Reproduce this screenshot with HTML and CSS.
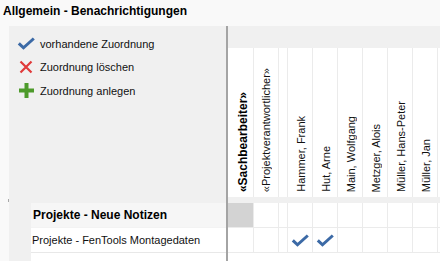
FILE: index.html
```html
<!DOCTYPE html>
<html lang="de">
<head>
<meta charset="utf-8">
<title>Allgemein - Benachrichtigungen</title>
<link rel="stylesheet" href="styles.css">
</head>
<body>
<div class="title">Allgemein - Benachrichtigungen</div>
<div class="main">
  <div class="gutter"><span class="grip"></span></div>
  <div class="left">
    <div class="legend">
      <div class="item">
        <span class="ico"><svg width="18" height="13" viewBox="0 0 18 13"><path d="M1.8 6.3 L6.5 10.8 L16.8 1.5" fill="none" stroke="#3c6aa6" stroke-width="3"/></svg></span>
        <span>vorhandene Zuordnung</span>
      </div>
      <div class="item">
        <span class="ico"><svg width="14" height="14" viewBox="0 0 14 14"><path d="M1.5 1.5 L12.5 12.5 M12.5 1.5 L1.5 12.5" fill="none" stroke="#e03a3a" stroke-width="2.2"/></svg></span>
        <span>Zuordnung löschen</span>
      </div>
      <div class="item">
        <span class="ico"><svg width="15" height="15" viewBox="0 0 15 15"><path d="M5.5 0 H9.5 V5.5 H15 V9.5 H9.5 V15 H5.5 V9.5 H0 V5.5 H5.5 Z" fill="#4d9a2b"/></svg></span>
        <span>Zuordnung anlegen</span>
      </div>
    </div>
    <div class="rows">
      <div class="lrow group">Projekte - Neue Notizen</div>
      <div class="lrow">Projekte - FenTools Montagedaten</div>
    </div>
  </div>
  <div class="divider"></div>
  <div class="right">
    <div class="topband"></div>
    <div class="grid">
      <div class="h sach"><span>«Sachbearbeiter»</span></div>
      <div class="h proj"><span>«Projektverantwortlicher»</span></div>
      <div class="h gap"></div>
      <div class="h"><span>Hammer, Frank</span></div>
      <div class="h"><span>Hut, Arne</span></div>
      <div class="h"><span>Main, Wolfgang</span></div>
      <div class="h"><span>Metzger, Alois</span></div>
      <div class="h"><span>Müller, Hans-Peter</span></div>
      <div class="h"><span>Müller, Jan</span></div>
      <div class="h last"></div>
      <div class="band"></div>

      <div class="c dark"></div>
      <div class="c"></div>
      <div class="c"></div>
      <div class="c"></div>
      <div class="c"></div>
      <div class="c"></div>
      <div class="c"></div>
      <div class="c"></div>
      <div class="c"></div>
      <div class="c last"></div>

      <div class="c"></div>
      <div class="c"></div>
      <div class="c"></div>
      <div class="c"><svg width="18" height="13" viewBox="0 0 18 13"><path d="M1.8 6.3 L6.5 10.8 L16.8 1.5" fill="none" stroke="#3c6aa6" stroke-width="3"/></svg></div>
      <div class="c"><svg width="18" height="13" viewBox="0 0 18 13"><path d="M1.8 6.3 L6.5 10.8 L16.8 1.5" fill="none" stroke="#3c6aa6" stroke-width="3"/></svg></div>
      <div class="c"></div>
      <div class="c"></div>
      <div class="c"></div>
      <div class="c"></div>
      <div class="c last"></div>
    </div>
  </div>
</div>
</body>
</html>
```
FILE: styles.css
```css
* {
  box-sizing: border-box;
  margin: 0;
  padding: 0;
}

html, body {
  width: 440px;
  height: 261px;
  overflow: hidden;
}

body {
  font-family: "Liberation Sans", Arial, sans-serif;
  font-size: 11px;
  color: #111;
  background: #fff;
  display: flex;
  flex-direction: column;
}

.title {
  height: 26px;
  line-height: 23.5px;
  padding-left: 3px;
  font-weight: bold;
  font-size: 12px;
  color: #000;
  background: #f9f9f9;
  white-space: nowrap;
}

.main {
  flex: 1;
  display: flex;
  min-height: 0;
}

.gutter {
  width: 9px;
  background: #f9f9f9;
  display: flex;
  flex-direction: column;
  padding-top: 173px;
}

.grip {
  width: 1px;
  height: 3px;
  background: #a8a8a8;
  margin-left: 8px;
}

.left {
  width: 217px;
  background: #f0f0f0;
  display: flex;
  flex-direction: column;
}

.legend {
  height: 177px;
  padding: 6px 0 0 8px;
}

.item {
  height: 23.5px;
  display: flex;
  align-items: center;
  white-space: nowrap;
}

.ico {
  width: 18px;
  margin-right: 5px;
  display: flex;
  justify-content: center;
  align-items: center;
}

.rows {
  flex: 1;
  margin-left: 22px;
  background: #fff;
}

.lrow {
  height: 25px;
  line-height: 24px;
  padding-left: 1px;
  border-bottom: 1px solid #e8e8e8;
  white-space: nowrap;
}

.lrow.group {
  background: #f6f6f6;
  font-weight: bold;
  font-size: 12px;
  color: #000;
  padding-left: 2px;
  border-bottom-color: #f3f3f3;
}

.divider {
  width: 2px;
  background: #a4a4a4;
}

.right {
  flex: 1;
  display: flex;
  flex-direction: column;
  background: #fff;
  min-width: 0;
  overflow: hidden;
}

.topband {
  height: 22px;
  background: #f0f0f0;
}

.grid {
  display: grid;
  grid-template-columns: 26px 25px 9px repeat(6, 25px) minmax(0, 1fr);
  grid-template-rows: 149px 6px 25px 25px;
}

.h {
  border-right: 1px solid #ebebeb;
  display: flex;
  align-items: flex-end;
  justify-content: center;
  padding-left: 3px;
  padding-bottom: 5px;
}

.h span {
  writing-mode: vertical-rl;
  transform: rotate(180deg);
  line-height: 13px;
  white-space: nowrap;
  color: #111;
}

.h.sach {
  padding-left: 4px;
}

.h.sach span {
  font-weight: bold;
  font-size: 12px;
  line-height: 14px;
  color: #000;
}

.h.proj,
.h.gap {
  padding-left: 0;
}

.band {
  grid-column: 1 / -1;
  background: #f0f0f0;
}

.c {
  border-right: 1px solid #ebebeb;
  border-bottom: 1px solid #ebebeb;
  display: flex;
  align-items: center;
  justify-content: center;
}

.c.dark {
  background: #d3d3d3;
}

.last {
  border-right: none;
}
```
